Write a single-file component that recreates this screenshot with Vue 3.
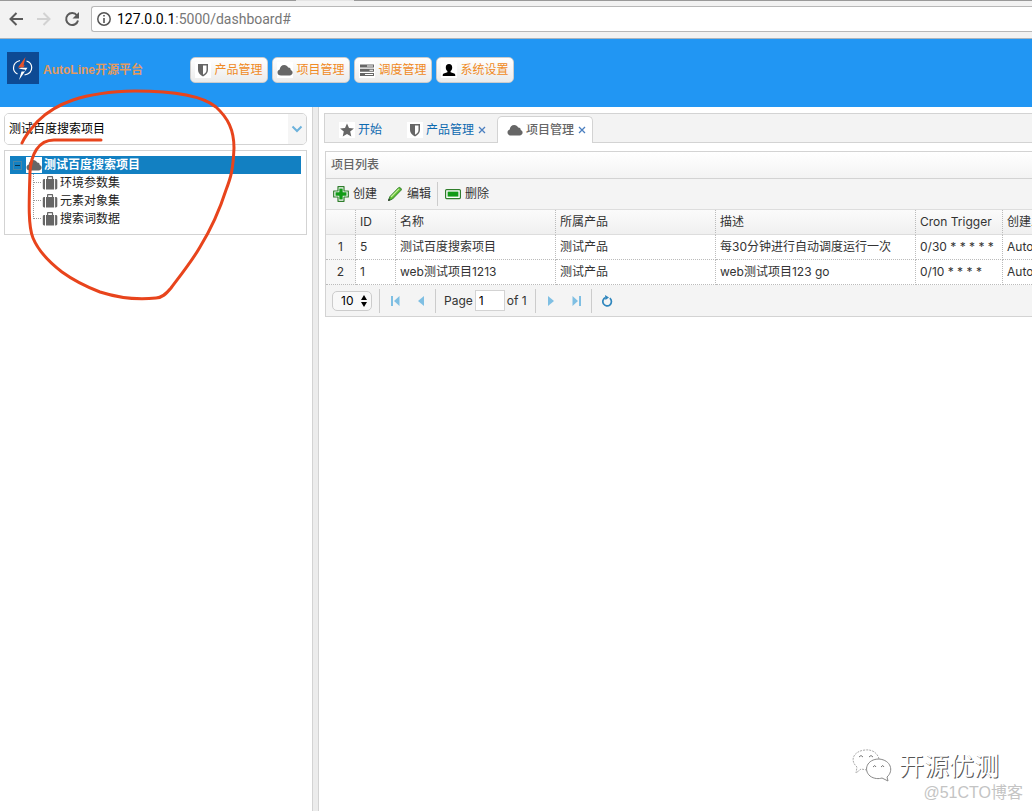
<script setup>
import { ref } from 'vue'

const menu = [
  { label: '产品管理', icon: 'shield' },
  { label: '项目管理', icon: 'cloud' },
  { label: '调度管理', icon: 'server' },
  { label: '系统设置', icon: 'user' }
]
const tabs = [
  { label: '开始', icon: 'star', closable: false },
  { label: '产品管理', icon: 'shield', closable: true },
  { label: '项目管理', icon: 'cloud', closable: true }
]
const active = ref(2)
const project = ref('测试百度搜索项目')
const children = ['环境参数集', '元素对象集', '搜索词数据']
const rows = [
  { id: 5, name: '测试百度搜索项目', product: '测试产品', desc: '每30分钟进行自动调度运行一次', cron: '0/30 * * * * *', by: 'AutoLine' },
  { id: 1, name: 'web测试项目1213', product: '测试产品', desc: 'web测试项目123 go', cron: '0/10 * * * *', by: 'AutoLine' }
]
const page = ref('1')
const size = ref('10')
const url = '5000/dashboard#'
</script>

<template>
  <div class="page">
    <svg class="defs" aria-hidden="true">
      <symbol id="i-shield" viewBox="0 0 16 16"><path fill-rule="evenodd" d="M3 2h10v6c0 3-2.200 5-5 6.500C5.200 13 3 11 3 8zM8 3.500v9.200c2.200-1.200 3.500-2.700 3.500-4.700V3.500z" /></symbol>
      <symbol id="i-cloud" viewBox="0 0 16 16"><path d="M4 13.500C1.800 13.500.5 12.200.5 10.500c0-1.500 1-2.500 2.200-2.900C2.900 4.800 4.800 3 7.200 3c1.900 0 3.300 1 3.900 2.600 1.700-.2 2.700 1 2.600 2.400 1.200.4 1.900 1.400 1.900 2.600 0 1.700-1.300 2.900-3 2.900z" /></symbol>
      <symbol id="i-server" viewBox="0 0 16 16"><path fill-rule="evenodd" d="M1 2.500h14v3H1zM8 3.500v1h6v-1zM1 6.800h14v3H1zM10.500 7.800v1H14v-1zM1 11h14v3H1zM6 12v1h8v-1z" /></symbol>
      <symbol id="i-user" viewBox="0 0 16 16"><path d="M8 2c2.200 0 3.200 1.500 3.200 3.400 0 1.600-.7 3-1.600 3.700v1.200l3.600 1.300c.8.300 1.100 1 1.100 2.400H1.700c0-1.400.3-2.100 1.100-2.400l3.600-1.300V9.100c-.9-.7-1.600-2.100-1.600-3.700C4.800 3.500 5.800 2 8 2z" /></symbol>
      <symbol id="i-star" viewBox="0 0 16 16"><path d="M8 1.500l2 4.400 4.900.5-3.700 3.200 1.100 4.800L8 11.900l-4.300 2.500 1.100-4.800L1.100 6.400 6 5.900z" /></symbol>
      <symbol id="i-case" viewBox="0 0 16 16"><path fill-rule="evenodd" d="M5 4V2.200C5 1.500 5.400 1 6.100 1H10c.7 0 1.100.5 1.100 1.200V4h1v10.500H4V4zM6.200 4h3.700V2.200H6.200zM3 4v10.500h-.8c-.8 0-1.400-.6-1.400-1.400V5.400C.8 4.600 1.400 4 2.200 4zM13.100 4h.8c.8 0 1.400.6 1.400 1.400v7.700c0 .8-.6 1.400-1.400 1.400h-.8z" /></symbol>
    </svg>

    <div class="browser">
      <button class="nav" aria-label="Back"><svg width="16" height="16" viewBox="0 0 16 16"><path d="M15 8H2.500M8.500 2L2.500 8l6 6" fill="none" stroke="#5a5a5a" stroke-width="2" /></svg></button>
      <button class="nav" aria-label="Forward"><svg width="16" height="16" viewBox="0 0 16 16"><path d="M1 8h12.500M7.500 2l6 6-6 6" fill="none" stroke="#d2d2d2" stroke-width="2" /></svg></button>
      <button class="nav" aria-label="Reload"><svg width="16" height="16" viewBox="0 0 16 16"><path d="M13 4.500A6 6 0 1 0 14 9.500" fill="none" stroke="#5a5a5a" stroke-width="2" /><path d="M15 1v6.500H8.500z" fill="#5a5a5a" /></svg></button>
      <div class="address">
        <svg width="14" height="14" viewBox="0 0 14 14"><circle cx="7" cy="7" r="6.200" fill="none" stroke="#555" stroke-width="1.500" /><path d="M6.200 3h1.600v1.600H6.200zM6.200 6h1.600v5H6.200z" fill="#555" /></svg>
        <span><b>127.0.0.1</b>:{{ url }}</span>
      </div>
    </div>

    <header class="top">
      <svg class="logo" width="32" height="32" viewBox="0 0 32 32">
        <rect width="32" height="32" fill="#0d4a94" />
        <path d="M13 8.500C9 9.500 6.500 12.500 6.500 16c0 2.700 1.500 4.800 4 6M19.500 9c3.200 1 5.200 3.500 5.200 6.500 0 4-3 6.700-7.200 7.500" fill="none" stroke="#fff" stroke-width="1.200" />
        <path d="M18.500 5l-7.500 10.500h5L18 13.500h-1.500z" fill="#e8532b" />
        <path d="M11.500 16.500L14 15.800h6.500L12 28l2.500-8.500h3l1-1.800z" fill="#fff" />
      </svg>
      <strong class="brand">AutoLine开源平台</strong>
      <nav class="menu">
        <button v-for="m in menu" :key="m.label" class="menu-btn">
          <svg :class="['ico', { black: m.icon === 'user' }]"><use :href="'#i-' + m.icon" /></svg>{{ m.label }}
        </button>
      </nav>
    </header>

    <div class="body">
      <aside class="side">
        <div class="combo">
          <input v-model="project" aria-label="项目" type="text" />
          <button aria-label="展开"><svg width="12" height="8" viewBox="0 0 12 8"><path d="M1.500 1.500L6 6l4.500-4.500" fill="none" stroke="#6cb2dc" stroke-width="2" /></svg></button>
        </div>
        <div class="tree">
          <div class="root">
            <svg width="16" height="16" viewBox="0 0 16 16"><rect x="3.500" y="4.500" width="8" height="8" fill="none" stroke="#4a86a6" /><path d="M5 8.500h5" stroke="#062f4d" /></svg>
            <svg class="ico"><use href="#i-cloud" /></svg>
            <span>测试百度搜索项目</span>
          </div>
          <ul>
            <li v-for="(c, i) in children" :key="c">
              <svg width="16" height="18" viewBox="0 0 16 18"><path :d="i === 2 ? 'M7.5 0V9' : 'M7.5 0V18'" class="dots" /><path d="M8 8.500h8" class="dots" /></svg>
              <svg class="ico plain"><use href="#i-case" /></svg>
              <span>{{ c }}</span>
            </li>
          </ul>
        </div>
      </aside>
      <div class="split"></div>
      <main class="main">
        <div class="tabs">
          <div v-for="(t, i) in tabs" :key="t.label" :class="['tab', { on: i === active, wide: !t.closable }]">
            <button class="tab-label" @click="active = i"><svg class="ico"><use :href="'#i-' + t.icon" /></svg>{{ t.label }}</button>
            <button v-if="t.closable" class="close" aria-label="关闭"><svg width="8" height="8" viewBox="0 0 8 8"><path d="M1 1l6 6M7 1L1 7" stroke="#4b7fc0" stroke-width="1.300" /></svg></button>
          </div>
        </div>
        <section class="panel">
          <h2>项目列表</h2>
          <div class="tools">
            <button><svg width="16" height="16" viewBox="0 0 16 16"><path d="M5 .7h6V5h4.300v6H11v4.300H5V11H.7V5H5z" fill="#fff" stroke="#2f7d2b" stroke-width="1.200" stroke-linejoin="round" /><path d="M6.300 2.500h3.400v3.800h3.800v3.400H9.700v3.800H6.300V9.700H2.500V6.300h3.800z" fill="#119b16" /></svg>创建</button>
            <button><svg width="16" height="16" viewBox="0 0 16 16"><path d="M1.500 14.500L3 10.500l8.700-8.900c1-.9 3.400 1.300 2.500 2.500L5.500 13z" fill="#5fbf2f" stroke="#2f7d2b" /><path d="M4 11l8-8.200" stroke="#c4ee9c" stroke-width="1.200" /><path d="M1 15l.8-2.500 1.700 1.700z" fill="#333" /></svg>编辑</button>
            <i></i>
            <button><svg width="16" height="16" viewBox="0 0 16 16"><rect x=".6" y="3.600" width="14.800" height="9" rx="1" fill="#fff" stroke="#2f7d2b" stroke-width="1.200" /><path d="M2.600 5.600h10.800v5H2.600z" fill="#119b16" /></svg>删除</button>
          </div>
          <table>
            <colgroup><col class="c30" /><col class="c40" /><col class="c160" /><col class="c160" /><col class="c200" /><col class="c87" /><col /></colgroup>
            <thead><tr><th></th><th>ID</th><th>名称</th><th>所属产品</th><th>描述</th><th>Cron Trigger</th><th>创建人</th></tr></thead>
            <tbody>
              <tr v-for="(r, i) in rows" :key="r.id">
                <td class="num">{{ i + 1 }}</td><td>{{ r.id }}</td><td>{{ r.name }}</td><td>{{ r.product }}</td><td>{{ r.desc }}</td><td>{{ r.cron }}</td><td>{{ r.by }}</td>
              </tr>
            </tbody>
          </table>
          <div class="pager">
            <div class="size">
              <select v-model="size" aria-label="每页条数"><option>10</option><option>20</option><option>50</option></select>
              <svg width="6" height="12" viewBox="0 0 6 12"><path d="M3 0l3 5H0zM3 12l3-5H0z" fill="#000" /></svg>
            </div>
            <i></i>
            <button aria-label="首页"><svg width="10" height="10" viewBox="0 0 10 10"><path d="M1 0h2v10H1zM9.500 0v10L4 5z" fill="#7fbfe3" /></svg></button>
            <button aria-label="上一页"><svg width="10" height="10" viewBox="0 0 10 10"><path d="M8 0v10L2 5z" fill="#7fbfe3" /></svg></button>
            <i></i>
            <label class="pg">Page <input v-model="page" type="text" /></label><span class="of">of 1</span>
            <i></i>
            <button aria-label="下一页"><svg width="10" height="10" viewBox="0 0 10 10"><path d="M2 0v10l6-5z" fill="#7fbfe3" /></svg></button>
            <button aria-label="末页"><svg width="10" height="10" viewBox="0 0 10 10"><path d="M7 0h2v10H7zM.5 0v10L6 5z" fill="#7fbfe3" /></svg></button>
            <i></i>
            <button aria-label="刷新"><svg width="12" height="12" viewBox="0 0 12 12"><path d="M8.800 3.200A4.300 4.300 0 1 1 4.500 2.600" fill="none" stroke="#2f86bd" stroke-width="1.700" /><path d="M4 0l4 2.500L4.500 5z" fill="#2f86bd" /></svg></button>
          </div>
        </section>
      </main>
    </div>

    <svg class="ink" width="240" height="304" viewBox="0 0 240 304" aria-hidden="true">
      <path d="M22 143C26 134 32 128 38 121C55 104 82 92 135 91C178 91 204 97 216 107C228 118 234 130 234 148C233 170 231 177 226 190C219 212 211 229 200 247C192 261 180 276 171 288C166 294 162 298 156 298C139 300 119 298 100 292C87 287 73 280 62 272C49 262 38 250 33 238C28 226 29 202 30 172C31 155 38 140 54 140H101" />
    </svg>

    <div class="mark">
      <div class="mark-row">
        <svg width="42" height="34" viewBox="0 0 42 34" fill="none" stroke="#aaa" stroke-width="1">
          <path d="M16 21l-6-1-5 4 1-6C-2 11 3 2 14 1c8-1 13 4 14 9" stroke-dasharray="2 1" />
          <path d="M36 28c7-6 4-17-8-18-12 0-16 11-9 17 4 3 9 3 12 2l6 3z" stroke="#888" />
          <path d="M8 8q2-3 4 0M18 8q2-3 4 0M22 18q2-3 3 0M30 18q2-3 3 0" stroke="#777" />
        </svg>
        <span class="big">开源优测</span>
      </div>
      <span class="small">@51CTO博客</span>
    </div>
  </div>
</template>

<style>
html, body { margin: 0; background: #fff; overflow: hidden; }
</style>

<style scoped>
* { box-sizing: border-box; }
.page { position: relative; display: flex; flex-direction: column; min-height: 100vh; overflow: hidden; color: #333; font: 12px/18px Inter, "Noto Sans CJK SC", sans-serif; }
button { display: flex; align-items: center; justify-content: center; padding: 0; border: 0; background: none; color: inherit; font: inherit; white-space: nowrap; }
svg { flex: none; display: block; }
input { font: inherit; color: #000; padding: 0; outline: 0; }
.defs { position: absolute; width: 0; height: 0; }
.ico { width: 16px; height: 16px; fill: #666; background: #fff; }
.ico.black { fill: #000; }
.ico.plain { background: none; }

.browser { display: flex; align-items: center; height: 39px; padding-left: 8px; gap: 12px; background: linear-gradient(90deg, #999 296px, #e4e4e4 296px, #e4e4e4 354px, #999 354px) 0 0 / 100% 1px no-repeat #f2f2f2; border-bottom: 1px solid #a9b4be; }
.nav { width: 16px; height: 16px; }
.address { flex: 1; display: flex; align-items: center; gap: 6px; height: 26px; margin-left: -1px; padding-left: 5px; background: #fff; border: 1px solid #b8b8b8; border-right: 0; border-radius: 3px 0 0 3px; color: #777; font: 14px/20px Roboto, sans-serif; }
.address b { color: #000; font-weight: 400; }

.top { display: flex; align-items: center; height: 68px; padding: 0 7px; background: #2196f3; }
.logo { margin-bottom: 10px; }
.brand { width: 147px; margin: 0 0 6px 4px; color: #e39a5e; font-family: "Liberation Sans", "Noto Sans CJK SC", sans-serif; white-space: nowrap; }
.menu { display: flex; gap: 4px; margin-bottom: 6px; }
.menu-btn { width: 78px; height: 26px; gap: 3px; border: 1px solid #ccc; border-radius: 5px; background: linear-gradient(#fff, #ebebeb); color: #f08a24; }

.body { flex: 1; display: flex; }
.side { flex: none; width: 312px; padding: 6px 5px 0 4px; }
.combo { display: flex; height: 32px; border: 1px solid #d3d3d3; border-radius: 5px; overflow: hidden; }
.combo input { flex: 1; min-width: 0; border: 0; padding-left: 4px; }
.combo button { width: 18px; background: #f5f5f5; }
.tree { margin-top: 5px; padding: 5px 5px 6px; border: 1px solid #d3d3d3; }
.root { display: flex; align-items: center; height: 18px; background: #1280c2; color: #fff; font-weight: 700; }
.root span { margin-left: 2px; }
.tree ul { margin: 0; padding: 0 0 0 16px; list-style: none; color: #222; }
.tree li { display: flex; align-items: center; height: 18px; }
.tree li span { margin-left: 2px; }
.dots { fill: none; stroke: #999; stroke-dasharray: 1 1; }
.split { flex: none; width: 7px; background: #ececec; border: 1px solid #d3d3d3; border-width: 0 1px; }

.main { flex: 1; min-width: 0; padding: 6px 0 0 5px; }
.tabs { display: flex; align-items: flex-end; gap: 4px; height: 30px; padding-left: 4px; background: #f3f3f3; border: 1px solid #d3d3d3; border-right: 0; }
.tab { display: flex; align-items: center; height: 27px; margin-bottom: -1px; padding: 0 6px 1px 9px; gap: 4px; border: 1px solid transparent; border-bottom: 0; border-radius: 5px 5px 0 0; color: #0e6ab0; }
.tab.wide { padding-right: 10px; }
.tab.on { background: #fff; border-color: #d3d3d3; color: #666; font-weight: 500; }
.tab-label { gap: 3px; }
.close { width: 8px; height: 8px; }

.panel { margin: 8px 0 0 1px; border: 1px solid #d3d3d3; border-right: 0; }
h2 { margin: 0; height: 27px; padding-left: 5px; border-bottom: 1px solid #d3d3d3; background: linear-gradient(#fff, #f3f3f3); color: #666; font-size: 12px; font-weight: 500; line-height: 26px; }
.tools { display: flex; align-items: center; height: 31px; padding-left: 7px; background: #f4f4f4; border-bottom: 1px solid #ddd; }
.tools button { gap: 4px; margin-right: 10px; }
.tools i { width: 1px; height: 24px; margin: 0 7px 0 -4px; background: #ccc; }
table { width: 100%; table-layout: fixed; border-collapse: separate; border-spacing: 0; }
.c30 { width: 30px; } .c40 { width: 40px; } .c87 { width: 87px; } .c160 { width: 160px; } .c200 { width: 200px; }
th, td { height: 25px; padding: 0 0 0 4px; overflow: hidden; white-space: nowrap; text-align: left; font-weight: 400; border-right: 1px dotted #bbb; border-bottom: 1px dotted #bbb; }
th { background: linear-gradient(#fbfbfb, #f0f0f0); border-bottom: 1px solid #ddd; }
th:last-child, td:last-child { border-right: 0; }
.num { padding: 0; text-align: center; background: #f7f7f7; }

.pager { display: flex; align-items: center; height: 31px; padding-left: 6px; background: #f4f4f4; }
.pager i { width: 1px; height: 24px; margin: 0 2px 0 1px; background: #ccc; }
.pager button { width: 26px; height: 26px; }
.size { display: grid; align-items: center; width: 40px; height: 20px; margin-right: 6px; }
.size select, .size svg { grid-area: 1 / 1; }
.size select { width: 40px; height: 20px; padding: 0 0 0 8px; appearance: none; border: 1px solid #ccc; border-radius: 5px; background: #f8f8f8; color: #000; font: inherit; }
.size svg { justify-self: end; margin-right: 5px; pointer-events: none; }
.pg { display: flex; align-items: center; gap: 2px; margin-left: 6px; }
.pg input { width: 30px; height: 21px; padding-left: 3px; border: 1px solid #d3d3d3; background: #fff; }
.of { width: 27px; margin-left: 2px; white-space: nowrap; }

.ink { position: absolute; left: 0; top: 0; pointer-events: none; }
.ink path { fill: none; stroke: #e8441c; stroke-width: 3; stroke-linecap: round; stroke-linejoin: round; }
.mark { position: absolute; right: 9px; bottom: 8px; display: flex; flex-direction: column; align-items: flex-end; pointer-events: none; }
.mark-row { display: flex; align-items: center; gap: 6px; margin-right: 24px; }
.big { color: #fff; font-size: 25px; line-height: 34px; text-shadow: 1px 1px 0 #555; }
.small { color: #c4c4c4; font: 16px/20px "Liberation Sans", "Noto Sans CJK SC", sans-serif; }
</style>
